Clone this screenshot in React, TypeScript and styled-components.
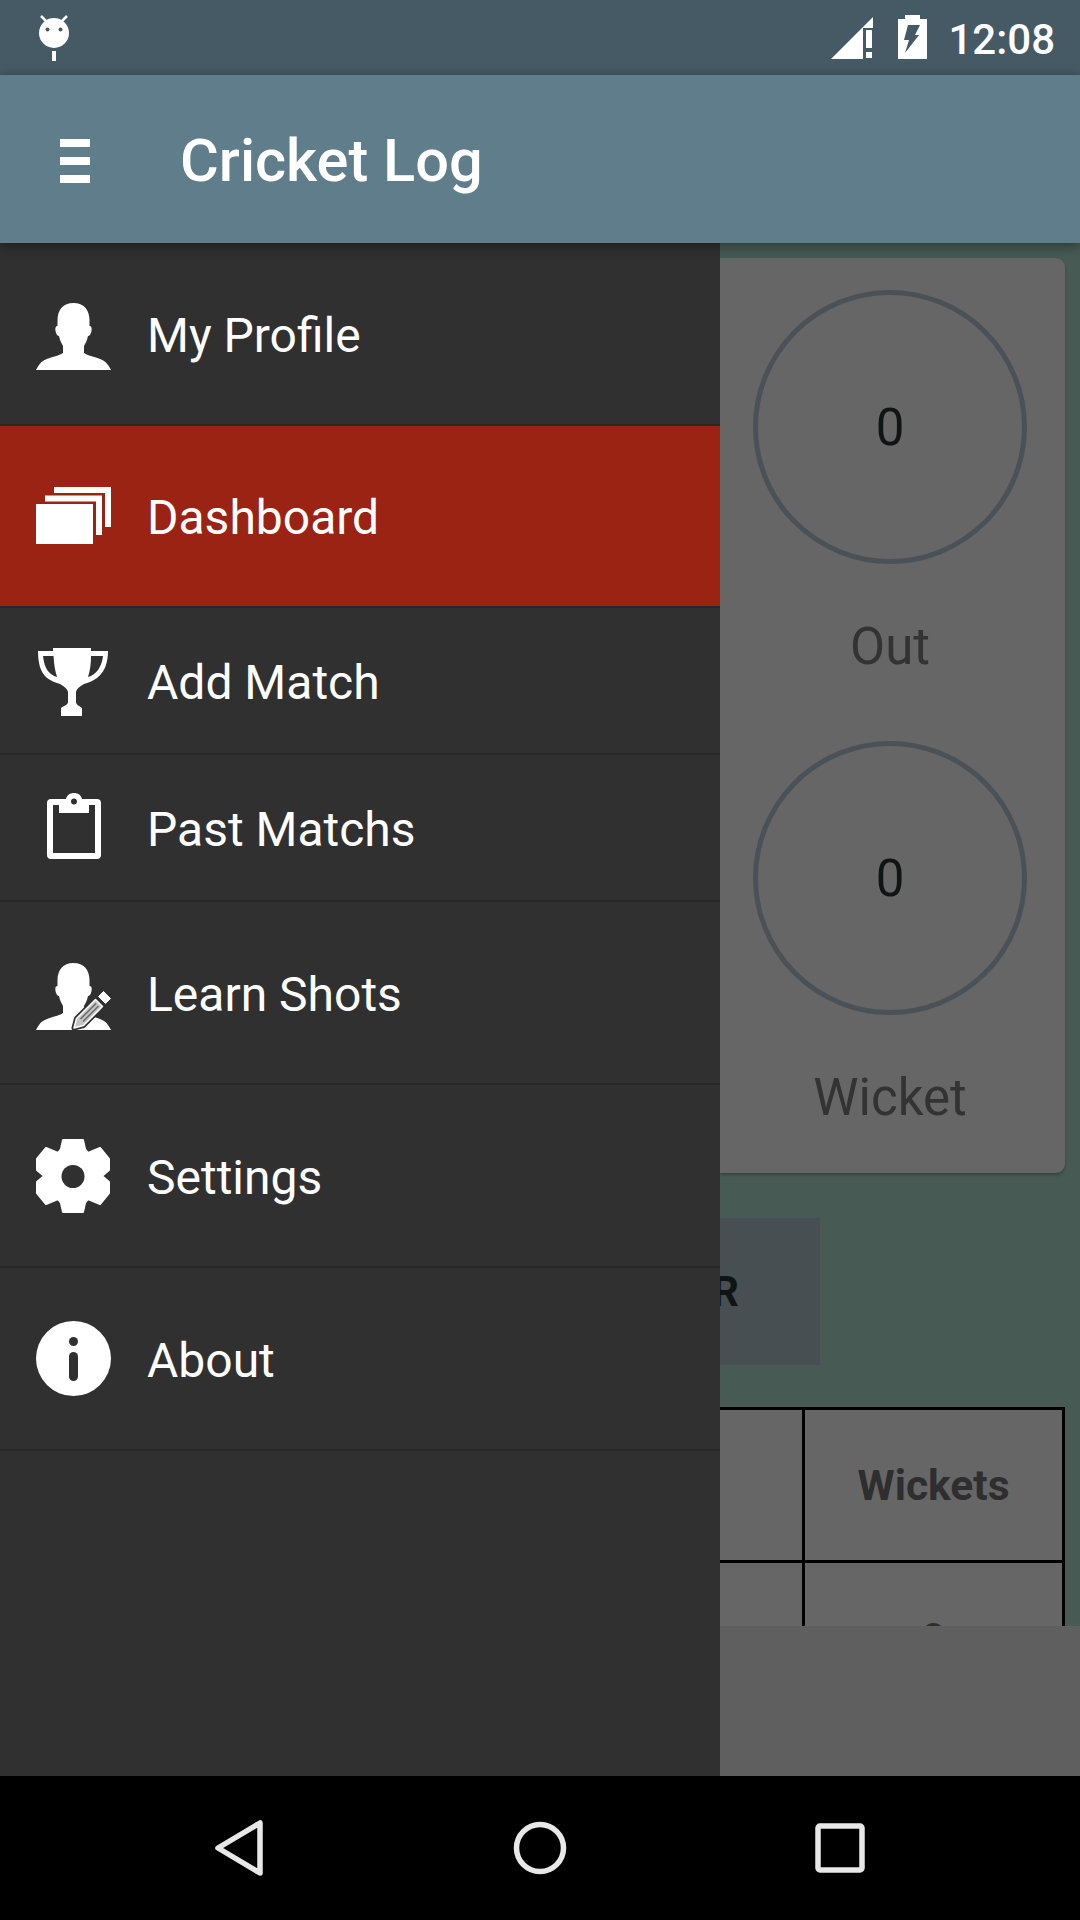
import React from "react";
import styled, { createGlobalStyle } from "styled-components";

const GlobalStyle = createGlobalStyle`
  html, body {
    margin: 0;
    padding: 0;
    background: #000;
  }
  body {
    font-family: Roboto, "Liberation Sans", sans-serif;
  }
`;

// nudge: how far the artwork sits off the row's centre in the design
const menu = [
  { label: "My Profile", icon: "profile", height: 183, nudge: 3 },
  { label: "Dashboard", icon: "dashboard", height: 182, nudge: -1, active: true },
  { label: "Add Match", icon: "trophy", height: 147, nudge: 2 },
  { label: "Past Matchs", icon: "clipboard", height: 147, nudge: -2 },
  { label: "Learn Shots", icon: "learn", height: 183, nudge: 4 },
  { label: "Settings", icon: "settings", height: 183, nudge: 0 },
  { label: "About", icon: "about", height: 183, nudge: 0 },
];

function Head() {
  return (
    <path d="M37.500 0C27 0 21.500 7 21.500 17C21.500 19 21.500 21 21.500 23C19.500 23 19 25 19.500 28C20 31 21.500 33 23 33C24 38 26 41 27 43V50C22 54 8 54 3 62C1.500 64 0.500 66 0 67H75C74.500 66 73.500 64 72 62C67 54 53 54 48 50V43C49 41 51 38 52 33C53.500 33 55 31 55.500 28C56 25 55.500 23 53.500 23C53.500 21 53.500 19 53.500 17C53.500 7 48 0 37.500 0Z" fill="#fff" />
  );
}

function MenuIcon({ name }: { name: string }) {
  switch (name) {
    case "profile":
      return (
        <svg width="75" height="67" viewBox="0 0 75 67">
          <Head />
        </svg>
      );
    case "dashboard":
      return (
        <svg width="75" height="57" viewBox="0 0 75 57">
          <path d="M18 0H75V40H69V6H18Z" fill="#fff" />
          <path d="M9 8.500H66V48H60V14.500H9Z" fill="#fff" />
          <rect x="0" y="17" width="57" height="40" fill="#fff" />
        </svg>
      );
    case "trophy":
      return (
        <svg width="75" height="69" viewBox="0 0 75 69">
          <path d="M17 0H55V3H72C72 14 69 24 61 30C57 33 52 35 48 36C45 38 41 40 40 44V54C40 57 44 58 46 60V68H25V60C27 58 32 57 32 54V44C31 40 27 38 24 36C20 35 15 33 11 30C4 24 2 14 2 3H17ZM7 8C8 16 10 22 15 26C17 27.500 19 28.500 21 29C19 23 18 16 17.500 8ZM67 8H55C55 16 54 23 52 29C54 28.500 56 27.500 58 26C63 22 66 16 67 8Z" fill="#fff" fillRule="evenodd" />
        </svg>
      );
    case "clipboard":
      return (
        <svg width="54" height="66" viewBox="0 0 54 66">
          <path d="M27 0C31 0 34 2 35 6H50C52.500 6 54 7.500 54 10V62C54 64.500 52.500 66 50 66H4C1.500 66 0 64.500 0 62V10C0 7.500 1.500 6 4 6H19C20 2 23 0 27 0ZM27 5.500C25.300 5.500 24 6.800 24 8.500C24 10.200 25.300 11.500 27 11.500C28.700 11.500 30 10.200 30 8.500C30 6.800 28.700 5.500 27 5.500ZM6 12V60H48V12H42V20H12V12Z" fill="#fff" fillRule="evenodd" />
        </svg>
      );
    case "learn":
      return (
        <svg width="75" height="67" viewBox="0 0 75 67">
          <Head />
          <path d="M38 65L40.500 55.500L62.500 33.500L67.500 28.500L74.500 35.500L69.500 40.500L47.500 62.500Z" fill="#303030" stroke="#303030" strokeWidth="5" strokeLinejoin="round" />
          <path d="M38 65L40.500 55.500L59.500 36.500L66.500 43.500L47.500 62.500Z" fill="#c4c4c4" stroke="#fff" strokeWidth="1.500" strokeLinejoin="round" />
          <path d="M62.500 33.500L67.500 28.500L74.500 35.500L69.500 40.500Z" fill="#fff" stroke="#fff" strokeWidth="1" strokeLinejoin="round" />
          <path d="M44.500 56L60 40.500M47 58.500L62.500 43" stroke="#6c6c6c" strokeWidth="1.500" />
        </svg>
      );
    case "settings":
      return (
        <svg width="75" height="74" viewBox="0 0 75 74">
          <path d="M27 1H47L49 10L52 14L64 9L73 20V31L66 37L73 43V54L64 65L52 60L49 64L47 73H27L25 64L22 60L10 65L1 54V43L8 37L1 31V20L10 9L22 14L25 10Z" fill="#fff" stroke="#fff" strokeWidth="2" strokeLinejoin="round" />
          <circle cx="37" cy="37.500" r="11.500" fill="#303030" />
        </svg>
      );
    default:
      return (
        <svg width="75" height="75" viewBox="0 0 75 75">
          <circle cx="37.500" cy="37.500" r="37.500" fill="#fff" />
          <circle cx="37.500" cy="20.500" r="4.500" fill="#303030" />
          <rect x="33" y="31" width="9" height="29" rx="4.500" fill="#303030" />
        </svg>
      );
  }
}

export default function App() {
  return (
    <>
      <GlobalStyle />
      <Screen>
        <StatusBar>
          <svg width="32" height="46" viewBox="0 0 32 46">
            <path d="M3 1L9 7M29 1L23 7" stroke="#fff" strokeWidth="2.500" />
            <circle cx="16" cy="18" r="15" fill="#fff" />
            <circle cx="9.500" cy="14.500" r="2" fill="#465a65" />
            <circle cx="22.500" cy="14.500" r="2" fill="#465a65" />
            <rect x="14" y="36" width="4" height="10" fill="#fff" />
          </svg>
          <StatusRight>
            <svg width="42" height="44" viewBox="0 0 42 44">
              <path d="M0 44L42 2V13H32V44Z" fill="#fff" />
              <rect x="35" y="15" width="6" height="18" fill="#fff" />
              <rect x="35" y="37" width="6" height="6" fill="#fff" />
            </svg>
            <svg width="29" height="44" viewBox="0 0 29 44">
              <path d="M7 0H22V4H29V44H0V4H7Z" fill="#fff" />
              <path d="M10 10H22L17 20H21L7 38L11 25H6Z" fill="#465a65" />
            </svg>
            <Clock>12:08</Clock>
          </StatusRight>
        </StatusBar>
        <Toolbar>
          <MenuButton>
            <MenuBar />
            <MenuBar />
            <MenuBar />
          </MenuButton>
          <Title>Cricket Log</Title>
        </Toolbar>
        <Body>
          <Drawer>
            {menu.map((item) => (
              <DrawerRow key={item.label} $active={item.active} $height={item.height}>
                <IconSlot $nudge={item.nudge}>
                  <MenuIcon name={item.icon} />
                </IconSlot>
                <DrawerLabel>{item.label}</DrawerLabel>
              </DrawerRow>
            ))}
          </Drawer>
          <Content>
            <Scroller>
              <StatCard>
                <Stat>
                  <Ring>0</Ring>
                  <StatLabel>Out</StatLabel>
                </Stat>
                <Stat>
                  <Ring>0</Ring>
                  <StatLabel>Wicket</StatLabel>
                </Stat>
              </StatCard>
              <ActionButton>
                <ActionText>R</ActionText>
              </ActionButton>
              <ScoreTable>
                <HeaderRow>
                  <SideCell />
                  <WideCell>Wickets</WideCell>
                </HeaderRow>
                <ValueRow>
                  <SideCell />
                  <WideCell $value>0</WideCell>
                </ValueRow>
              </ScoreTable>
            </Scroller>
            <BottomBand />
          </Content>
        </Body>
        <NavBar>
          <svg width="50" height="58" viewBox="0 0 50 58">
            <path d="M46 4V54L4 29Z" fill="none" stroke="#e8e8e8" strokeWidth="5.500" strokeLinejoin="round" />
          </svg>
          <svg width="54" height="54" viewBox="0 0 54 54">
            <circle cx="27" cy="27" r="23.500" fill="none" stroke="#e8e8e8" strokeWidth="5.500" />
          </svg>
          <svg width="50" height="50" viewBox="0 0 50 50">
            <rect x="3" y="3" width="44" height="44" rx="2" fill="none" stroke="#e8e8e8" strokeWidth="5.500" />
          </svg>
        </NavBar>
      </Screen>
    </>
  );
}

const Screen = styled.div`
  width: 1080px;
  height: 1920px;
  display: flex;
  flex-direction: column;
  overflow: hidden;
`;

const StatusBar = styled.div`
  height: 75px;
  flex: none;
  background: #465a65;
  display: flex;
  align-items: flex-start;
  justify-content: space-between;
  padding: 15px 25px 0 38px;
  box-sizing: border-box;
`;

const StatusRight = styled.div`
  display: flex;
  align-items: flex-start;
  gap: 25px;
`;

const Clock = styled.span`
  color: #fff;
  font-size: 42px;
  font-weight: 500;
  line-height: 46px;
  margin: 2px 0 0 -4px;
`;

const Toolbar = styled.div`
  height: 168px;
  flex: none;
  background: #607d8b;
  display: flex;
  align-items: center;
  position: relative;
  z-index: 2;
  box-shadow: 0 3px 12px rgba(0, 0, 0, 0.4);
`;

const MenuButton = styled.div`
  width: 30px;
  margin: 3px 90px 0 60px;
  display: flex;
  flex-direction: column;
  gap: 10px;
`;

const MenuBar = styled.div`
  height: 8px;
  background: #fff;
`;

const Title = styled.h1`
  margin: 4px 0 0;
  color: #fff;
  font-size: 59.5px;
  font-weight: 500;
`;

const Body = styled.div`
  flex: 1;
  display: flex;
  min-height: 0;
`;

const Drawer = styled.nav`
  width: 720px;
  flex: none;
  background: #303030;
`;

const DrawerRow = styled.div<{ $active?: boolean; $height: number }>`
  height: ${(p) => p.$height}px;
  box-sizing: border-box;
  display: flex;
  align-items: center;
  padding-left: 36px;
  background: ${(p) => (p.$active ? "#9a2314" : "transparent")};
  border-bottom: 2px solid #282828;
`;

const IconSlot = styled.div<{ $nudge: number }>`
  width: 75px;
  flex: none;
  display: flex;
  justify-content: center;
  margin-right: 36px;
  transform: translateY(${(p) => p.$nudge}px);
`;

const DrawerLabel = styled.span`
  color: #fff;
  font-size: 48px;
  padding-top: 3px;
`;

const Content = styled.div`
  flex: 1;
  min-width: 0;
  background: #475a54;
  display: flex;
  flex-direction: column;
`;

const Scroller = styled.div`
  flex: 1;
  min-height: 0;
  overflow: hidden;
  padding-top: 15px;
`;

const StatCard = styled.section`
  width: 345px;
  height: 915px;
  box-sizing: border-box;
  background: #666;
  border-radius: 0 9px 9px 0;
  box-shadow: 0 2px 3px rgba(0, 0, 0, 0.25);
  padding-top: 32px;
  display: flex;
  flex-direction: column;
  gap: 66px;
`;

const Stat = styled.div`
  display: flex;
  flex-direction: column;
  align-items: center;
  width: 274px;
  margin-left: 33px;
`;

const Ring = styled.div`
  width: 274px;
  height: 274px;
  box-sizing: border-box;
  border: 5px solid #4a5258;
  border-radius: 50%;
  display: flex;
  align-items: center;
  justify-content: center;
  color: #101414;
  font-size: 51px;
`;

const StatLabel = styled.div`
  color: #333;
  font-size: 51px;
  line-height: 56px;
  margin-top: 55px;
`;

const ActionButton = styled.div`
  width: 100px;
  height: 147px;
  margin-top: 45px;
  background: #474f52;
  display: flex;
  align-items: center;
  color: #101414;
  font-size: 42px;
  font-weight: 700;
`;

const ActionText = styled.span`
  margin-left: -8px;
`;

const ScoreTable = styled.div`
  width: 345px;
  margin-top: 42px;
  background: #666;
  border-top: 3px solid #000;
  border-right: 3px solid #000;
  box-sizing: border-box;
`;

const HeaderRow = styled.div`
  height: 153px;
  box-sizing: border-box;
  display: flex;
  border-bottom: 3px solid #000;
`;

const ValueRow = styled.div`
  height: 150px;
  display: flex;
`;

const SideCell = styled.div`
  width: 82px;
  flex: none;
  border-right: 3px solid #000;
`;

const WideCell = styled.div<{ $value?: boolean }>`
  flex: 1;
  display: flex;
  align-items: center;
  justify-content: center;
  color: #2e2e2e;
  font-size: 42.500px;
  font-weight: ${(p) => (p.$value ? 400 : 700)};
`;

const BottomBand = styled.div`
  height: 150px;
  flex: none;
  background: #5f5f5f;
`;

const NavBar = styled.div`
  height: 144px;
  flex: none;
  background: #000;
  display: flex;
  align-items: center;
  justify-content: space-between;
  padding: 0 215px 0 214px;
`;
